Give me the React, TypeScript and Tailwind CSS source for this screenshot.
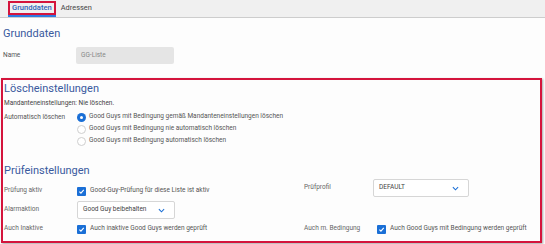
import React from 'react';

const Check = () => (
  <span className="w-[9px] h-[9px] rounded-[1px] bg-[#1a6fd6] flex items-center justify-center shrink-0">
    <svg width="7" height="7" viewBox="0 0 10 10">
      <path d="M2 5.2 L4.2 7.4 L8.2 2.8" fill="none" stroke="white" strokeWidth="1.6" />
    </svg>
  </span>
);

const Radio = ({ on }: { on?: boolean }) =>
  on ? (
    <span className="w-[9px] h-[9px] rounded-full bg-[#1a6fd6] flex items-center justify-center shrink-0">
      <span className="w-[3px] h-[3px] rounded-full bg-white" />
    </span>
  ) : (
    <span className="w-[9px] h-[9px] rounded-full border border-[#cfcfcf] bg-white shrink-0" />
  );

const Chevron = () => (
  <svg width="7" height="5" viewBox="0 0 8 5">
    <path d="M1 1 L4 4 L7 1" fill="none" stroke="#1a6fd6" strokeWidth="1.2" />
  </svg>
);

const Select = ({ value, w }: { value: string; w: string }) => (
  <div className={`${w} h-[18px] border border-[#d6d6d6] rounded-[2px] bg-white flex items-center justify-between pl-[5px] pr-[9px] text-[#444]`}>
    <span>{value}</span>
    <Chevron />
  </div>
);

export default function App() {
  return (
    <div className="w-[545px] h-[244px] bg-[#fdfdfd] overflow-hidden text-[6.5px] text-[#555] font-['Roboto','Liberation_Sans',sans-serif]">
      {/* Tabs */}
      <div className="h-[18px] bg-[#f0f0f0] border-b border-[#cdcdcd] flex items-end pl-[8px] gap-[5px]">
        <div className="h-[17px] flex flex-col">
          <div className="h-[14px] mt-[1px] border-2 border-[#d4143c] px-[2px] flex items-center text-[7.6px] font-medium text-[#2f63b8]">
            Grunddaten
          </div>
          <div className="h-[2px] bg-[#2f7ae0]" />
        </div>
        <div className="h-[17px] flex items-center pb-[1px] text-[7.4px] text-[#444]">Adressen</div>
      </div>

      <div className="px-[3px]">
        <div className="mt-[9px] text-[11px] leading-[14px] text-[#3a5a9e]">Grunddaten</div>
        <div className="mt-[6px] flex items-center">
          <div className="w-[73px]">Name</div>
          <div className="w-[98px] h-[17px] bg-[#e5e5e5] rounded-[2px] flex items-center pl-[5px] text-[#888]">GG-Liste</div>
        </div>
      </div>

      {/* Highlighted section */}
      <div className="mt-[14px] ml-[1px] w-[541px] h-[165px] border-2 border-[#d4143c] shadow-[1px_1px_2px_rgba(0,0,0,0.35)] px-[1px]">
        <div className="mt-[2px] text-[11px] leading-[14px] text-[#3a5a9e]">Löscheinstellungen</div>
        <div className="mt-[2px] leading-[10px] text-[#444]">Mandanteneinstellungen: Nie löschen.</div>
        <div className="mt-[3px] flex">
          <div className="w-[73px] leading-[12px]">Automatisch löschen</div>
          <div className="flex flex-col">
            {[
              ['Good Guys mit Bedingung gemäß Mandanteneinstellungen löschen', true],
              ['Good Guys mit Bedingung nie automatisch löschen', false],
              ['Good Guys mit Bedingung automatisch löschen', false],
            ].map(([t, on]) => (
              <div key={t as string} className="h-[12px] flex items-center gap-[3px]">
                <Radio on={on as boolean} />
                <span>{t as string}</span>
              </div>
            ))}
          </div>
        </div>

        <div className="mt-[17px] text-[11px] leading-[14px] text-[#3a5a9e]">Prüfeinstellungen</div>

        <div className="grid grid-cols-[300px_1fr]">
          <div className="flex items-center h-[18px] mt-[4px]">
            <div className="w-[73px] text-[#666]">Prüfung aktiv</div>
            <div className="flex items-center gap-[4px]">
              <Check />
              <span>Good-Guy-Prüfung für diese Liste ist aktiv</span>
            </div>
          </div>
          <div className="flex items-center h-[18px] mt-[1px]">
            <div className="w-[69px] text-[#666]">Prüfprofil</div>
            <Select value="DEFAULT" w="w-[96px]" />
          </div>

          <div className="flex items-center h-[18px] mt-[1px]">
            <div className="w-[73px] text-[#666]">Alarmaktion</div>
            <Select value="Good Guy beibehalten" w="w-[98px]" />
          </div>
          <div />

          <div className="flex items-center h-[10px] mt-[5px]">
            <div className="w-[73px] text-[#666]">Auch Inaktive</div>
            <div className="flex items-center gap-[4px]">
              <Check />
              <span>Auch inaktive Good Guys werden geprüft</span>
            </div>
          </div>
          <div className="flex items-center h-[10px] mt-[5px]">
            <div className="w-[73px] text-[#666]">Auch m. Bedingung</div>
            <div className="flex items-center gap-[4px]">
              <Check />
              <span>Auch Good Guys mit Bedingung werden geprüft</span>
            </div>
          </div>
        </div>
      </div>
    </div>
  );
}
